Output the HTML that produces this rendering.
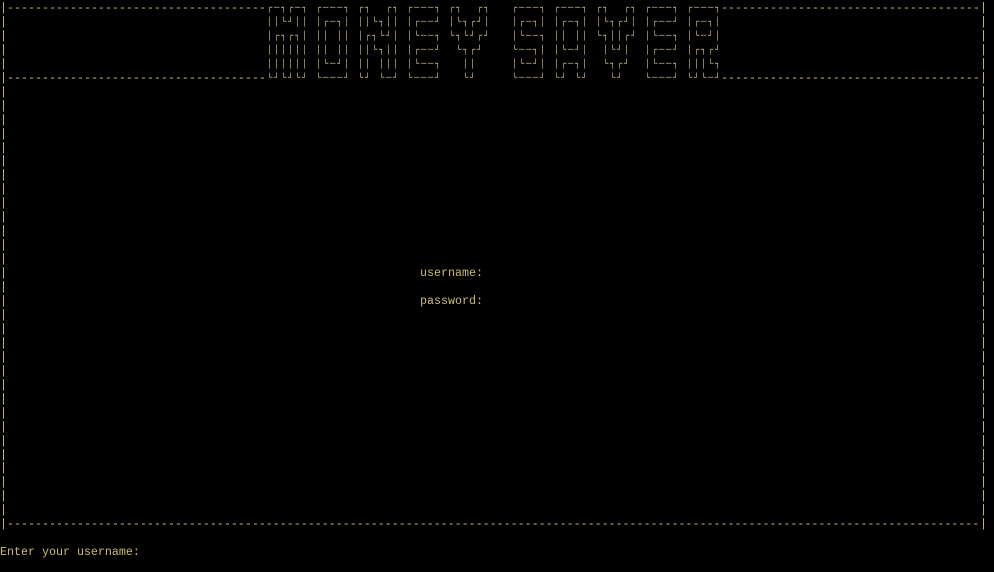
<!DOCTYPE html>
<html><head><meta charset="utf-8"><style>
html,body{margin:0;padding:0;background:#000;width:994px;height:572px;overflow:hidden}
pre{position:absolute;margin:0;font-family:"Liberation Mono","DejaVu Sans Mono",monospace;font-size:11.67px;line-height:13.95px;color:#cdbb72;white-space:pre}
pre.b{font-size:9px;letter-spacing:1.6px;line-height:13.95px;color:#d2c48a}
</style></head><body>
<pre style="left:0;top:2px">|
|
|
|
|
|
|
|
|
|
|
|
|
|
|
|
|
|
|
|
|
|
|
|
|
|
|
|
|
|
|
|
|
|
|
|
|
|</pre>
<pre style="left:980px;top:2px">|
|
|
|
|
|
|
|
|
|
|
|
|
|
|
|
|
|
|
|
|
|
|
|
|
|
|
|
|
|
|
|
|
|
|
|
|
|</pre>
<pre style="left:7px;top:2px">-------------------------------------




-------------------------------------</pre>
<pre style="left:721px;top:2px">-------------------------------------




-------------------------------------</pre>
<pre class="b" style="left:267px;top:2px">┌─┐┌─┐ ┌───┐ ┌┐  ┌┐ ┌───┐ ┌┐  ┌┐   ┌───┐ ┌───┐ ┌┐  ┌┐ ┌───┐ ┌───┐
││└┘││ │┌─┐│ ││└┐││ │┌──┘ │└┐┌┘│   │┌─┐│ │┌─┐│ │└┐┌┘│ │┌──┘ │┌─┐│
│┌┐┌┐│ ││ ││ │┌┐└┘│ │└──┐ └┐└┘┌┘   │└──┐ ││ ││ └┐││┌┘ │└──┐ │└─┘│
││││││ ││ ││ ││└┐││ │┌──┘  └┐┌┘    └──┐│ │└─┘│  │└┘│  │┌──┘ │┌┐┌┘
││││││ │└─┘│ ││ │││ │└──┐   ││     │└─┘│ │┌─┐│  └┐┌┘  │└──┐ │││└┐
└┘└┘└┘ └───┘ └┘ └─┘ └───┘   └┘     └───┘ └┘ └┘   └┘   └───┘ └┘└─┘</pre>
<pre style="left:420px;top:267px">username:

password:</pre>
<pre style="left:7px;top:518px">-------------------------------------------------------------------------------------------------------------------------------------------</pre>
<pre style="left:0;top:546px">Enter your username:</pre>
</body></html>
